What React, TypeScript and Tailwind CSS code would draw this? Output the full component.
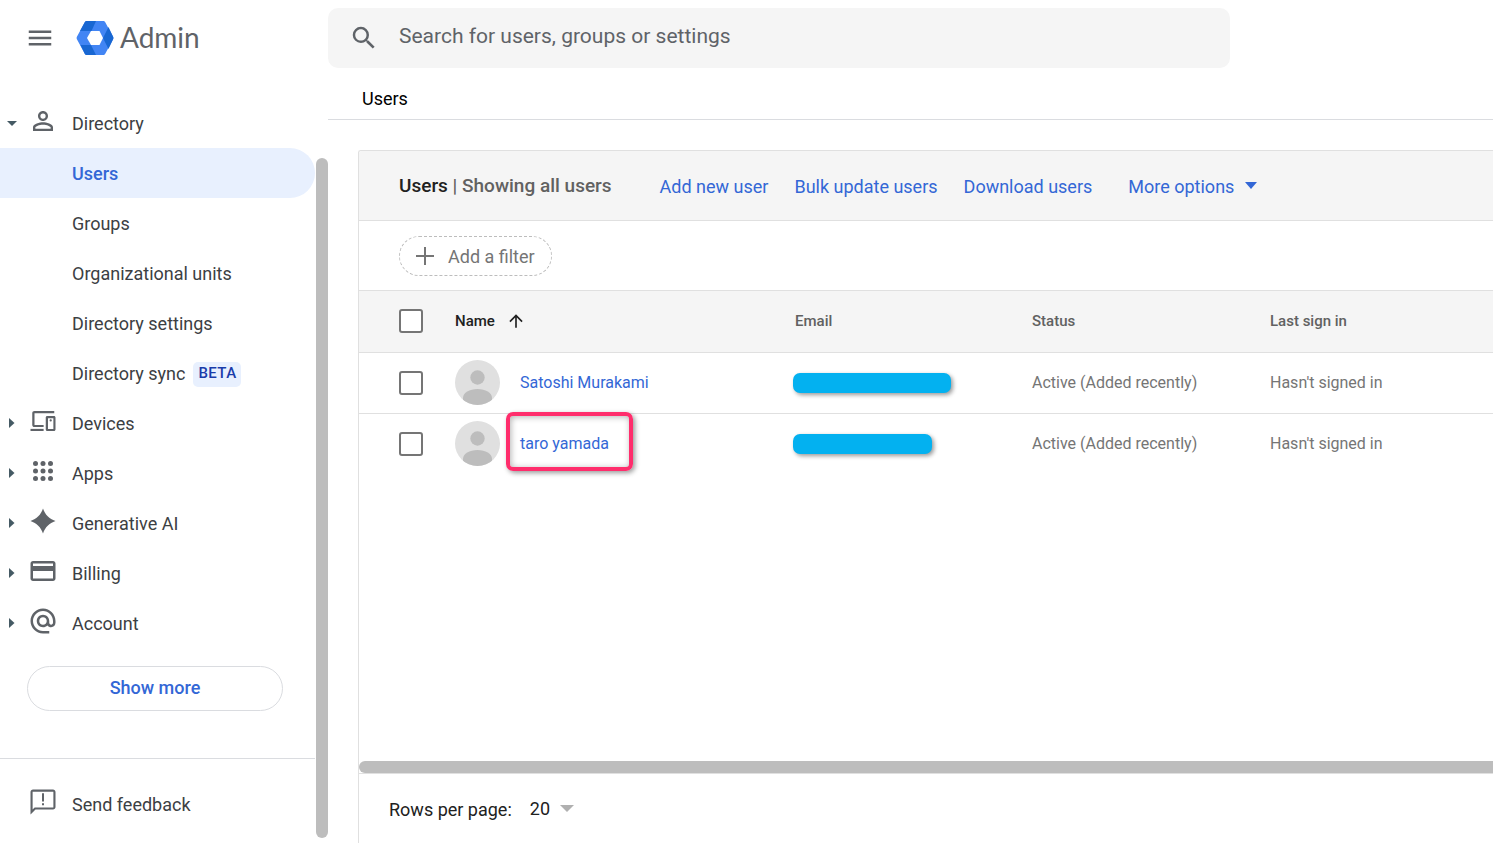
import { useState } from "react";
import type { ReactNode } from "react";
import {
  MdAlternateEmail,
  MdArrowUpward,
  MdMenu,
  MdOutlineCreditCard,
  MdPersonOutline,
  MdSearch,
} from "react-icons/md";

type NavItem = {
  label: string;
  icon: ReactNode;
  open?: boolean;
};

type User = {
  name: string;
  highlighted?: boolean;
  emailWidth: number;
  status: string;
  lastSignIn: string;
};

const users: User[] = [
  {
    name: "Satoshi Murakami",
    emailWidth: 158,
    status: "Active (Added recently)",
    lastSignIn: "Hasn't signed in",
  },
  {
    name: "taro yamada",
    highlighted: true,
    emailWidth: 139,
    status: "Active (Added recently)",
    lastSignIn: "Hasn't signed in",
  },
];

function AdminLogo() {
  return (
    <svg width="38" height="34" viewBox="0 0 38 34" aria-hidden="true">
      <path d="M10.5 0h17q1 0 1.600 1l8 14.700q.7 1.300 0 2.600l-8 14.700q-.6 1-1.600 1h-17q-1 0-1.600-1l-8-14.700q-.7-1.300 0-2.600l8-14.700q.6-1 1.600-1z" fill="#4285f4" />
      <path d="M10.500 0H20l-4.500 10H4l4.900-9q.6-1 1.600-1z" fill="#1967d2" />
      <path d="M32.500 6l4.600 9.700q.7 1.300 0 2.600L32.500 28 27 17z" fill="#1967d2" />
      <path d="M4.500 24H15l5 10h-9.500q-1 0-1.600-1z" fill="#1967d2" />
      <path d="M15 10h8.500l3.500 7-3.500 7H15l-4-7z" fill="#fff" />
    </svg>
  );
}

function DevicesIcon() {
  return (
    <svg width="30" height="30" viewBox="0 0 24 24" fill="currentColor" aria-hidden="true">
      <path d="M5.200 5.700H21V4H5.200C4.100 4 3.400 4.700 3.400 5.800v9.300c0 1 .7 1.700 1.800 1.700H12.500v-1.700H5.200z" />
      <path d="M2 18.300h10.500V20H2z" />
      <path fillRule="evenodd" d="M20.800 8h-5.400c-.7 0-1.200.5-1.200 1.200v9.600c0 .7.500 1.200 1.200 1.200h5.400c.7 0 1.200-.5 1.200-1.200V9.200c0-.7-.5-1.200-1.200-1.200zM16 9.800h4.300v8.500H16z" />
      <circle cx="18.150" cy="11.500" r=".9" />
    </svg>
  );
}

function AppsIcon() {
  return (
    <svg width="30" height="30" viewBox="0 0 24 24" fill="currentColor" aria-hidden="true">
      {[6, 12, 18].map((cy) =>
        [6, 12, 18].map((cx) => <circle key={`${cx}-${cy}`} cx={cx} cy={cy} r="2" />)
      )}
    </svg>
  );
}

function SparkIcon() {
  return (
    <svg width="30" height="30" viewBox="0 0 24 24" fill="currentColor" aria-hidden="true">
      <path d="M12 2c1.700 5 5 8.300 10 10-5 1.700-8.300 5-10 10-1.700-5-5-8.300-10-10 5-1.700 8.300-5 10-10z" />
    </svg>
  );
}

function FeedbackIcon() {
  return (
    <svg className="mb-1 text-[#5f6368]" width="30" height="30" viewBox="0 0 24 24" fill="currentColor" aria-hidden="true">
      <path fillRule="evenodd" d="M20 2H4c-1.100 0-2 .9-2 2v18l4-4h14c1.100 0 2-.9 2-2V4c0-1.100-.9-2-2-2zm.3 14.300H5.300L3.700 17.900V3.700h16.600z" />
      <path d="M11.200 5h1.600v6.500h-1.600zM11.200 13h1.600v1.600h-1.600z" />
    </svg>
  );
}

function Avatar() {
  return (
    <svg className="shrink-0" width="45" height="45" viewBox="0 0 45 45" aria-hidden="true">
      <defs>
        <clipPath id="avatar-clip">
          <circle cx="22.500" cy="22.500" r="22.500" />
        </clipPath>
      </defs>
      <g clipPath="url(#avatar-clip)">
        <rect width="45" height="45" fill="#e0e0e0" />
        <circle cx="22.500" cy="17.500" r="7.200" fill="#bdbdbd" />
        <path d="M8 45v-7c0-5.500 6.500-9 14.500-9S37 32.500 37 38v7z" fill="#bdbdbd" />
      </g>
    </svg>
  );
}

function Caret({ open }: { open?: boolean }) {
  return (
    <svg width="12" height="12" viewBox="0 0 12 12" fill="#455a64" aria-hidden="true">
      <path d={open ? "M1 4h10L6 9z" : "M3 1v10l5.500-5z"} />
    </svg>
  );
}

function NavRow({ label, icon, open }: NavItem) {
  return (
    <button type="button" aria-expanded={!!open} className="flex h-[50px] w-full items-center pl-1.5 text-left">
      <Caret open={open} />
      <span className="mb-1 ml-2.5 text-[#5f6368]">{icon}</span>
      <span className="ml-3.5 pt-0.5">{label}</span>
    </button>
  );
}

function SubLink({ label, active, badge }: { label: string; active?: boolean; badge?: string }) {
  return (
    <a
      href="#"
      aria-current={active ? "page" : undefined}
      className={
        active
          ? "flex h-[50px] items-center rounded-r-full bg-[#e8f0fe] pt-0.5 pl-[72px] font-medium text-[#3367d6]"
          : "flex h-[50px] items-center pt-0.5 pl-[72px]"
      }
    >
      {label}
      {badge && (
        <span className="ml-2 flex h-[25px] items-center rounded-[5px] bg-[#e8f0fe] px-[5px] text-[15px] font-medium tracking-wide text-[#1a3caa]">
          {badge}
        </span>
      )}
    </a>
  );
}

function Sidebar() {
  return (
    <aside className="flex w-[328px] shrink-0 text-lg text-[#3c4043]">
      <div className="min-w-0 flex-1">
        <nav aria-label="Main menu">
          <NavRow label="Directory" icon={<MdPersonOutline size={30} />} open />
          <SubLink label="Users" active />
          <SubLink label="Groups" />
          <SubLink label="Organizational units" />
          <SubLink label="Directory settings" />
          <SubLink label="Directory sync" badge="BETA" />
          <NavRow label="Devices" icon={<DevicesIcon />} />
          <NavRow label="Apps" icon={<AppsIcon />} />
          <NavRow label="Generative AI" icon={<SparkIcon />} />
          <NavRow label="Billing" icon={<MdOutlineCreditCard size={30} />} />
          <NavRow label="Account" icon={<MdAlternateEmail size={30} />} />
        </nav>
        <div className="pt-[18px] pr-8 pb-[47px] pl-[27px]">
          <button
            type="button"
            className="h-[45px] w-full rounded-full border border-[#dadce0] pb-0.5 font-medium text-[#3367d6]"
          >
            Show more
          </button>
        </div>
        <div className="border-t border-[#dadce0] pt-5">
          <button type="button" className="flex h-[50px] w-full items-center pl-7 text-left">
            <FeedbackIcon />
            <span className="ml-3.5 pt-0.5">Send feedback</span>
          </button>
        </div>
      </div>
      <div className="ml-px flex w-3 flex-col pt-[60px] pb-[5px]">
        <div className="flex-1 rounded-full bg-[#bdbdbd]" />
      </div>
    </aside>
  );
}

function Checkbox({ label }: { label: string }) {
  return (
    <input
      type="checkbox"
      aria-label={label}
      className="block size-6 appearance-none rounded-[3px] border-2 border-[#757575] bg-white checked:bg-[#3367d6]"
    />
  );
}

function UserRow({ user }: { user: User }) {
  return (
    <tr className="h-[61px] border-b border-[#e0e0e0] text-[#757575] last:border-b-0">
      <td className="pl-10">
        <Checkbox label={`Select ${user.name}`} />
      </td>
      <td>
        <div className="flex items-center gap-5">
          <Avatar />
          <a href="#" className="relative text-[#3367d6]">
            {user.name}
            {user.highlighted && (
              <span className="absolute -top-5 -right-6 -bottom-[15px] -left-3.5 rounded-[7px] border-4 border-[#ff2d6c] shadow-[2px_2px_5px_rgba(0,0,0,0.4),inset_1px_1px_6px_rgba(0,0,0,0.3)]" />
            )}
          </a>
        </div>
      </td>
      <td>
        <div
          className="-ml-0.5 h-5 rounded-[7px] bg-[#03b1f0] shadow-[2px_2px_4px_rgba(0,0,0,0.4)]"
          style={{ width: user.emailWidth }}
        />
      </td>
      <td>{user.status}</td>
      <td>{user.lastSignIn}</td>
    </tr>
  );
}

function UsersPanel() {
  const [rows, setRows] = useState("20");

  return (
    <section className="mt-[30px] ml-[30px] flex min-h-0 flex-1 flex-col overflow-hidden rounded-tl-[3px] border-t border-l border-[#e0e0e0]">
      <div className="flex h-[70px] shrink-0 items-center border-b border-[#e0e0e0] bg-[#f5f5f5] pl-10 text-lg whitespace-nowrap text-[#3367d6]">
        <h1 className="mr-12 text-[19px] font-medium text-[#616161]">
          <span className="text-[#212121]">Users</span> | Showing all users
        </h1>
        <div className="flex items-center gap-[26px] pt-0.5">
          <a href="#">Add new user</a>
          <a href="#">Bulk update users</a>
          <a href="#">Download users</a>
          <button type="button" className="ml-2.5 flex items-center gap-2.5">
            More options
            <svg className="mb-0.5" width="14" height="8" viewBox="0 0 14 8" fill="currentColor" aria-hidden="true">
              <path d="M1 0h12L7 7z" />
            </svg>
          </button>
        </div>
      </div>

      <div className="flex h-[70px] shrink-0 items-center border-b border-[#e0e0e0] pl-10">
        <button
          type="button"
          className="flex h-10 items-center rounded-full border border-dashed border-[#bdbdbd] px-4 text-lg text-[#757575]"
        >
          <svg className="mr-3.5" width="18" height="18" viewBox="0 0 18 18" stroke="currentColor" strokeWidth="2" aria-hidden="true">
            <path d="M9 0v18M0 9h18" />
          </svg>
          <span className="pt-0.5">Add a filter</span>
        </button>
      </div>

      <div className="min-h-0 flex-1 overflow-hidden">
        <table className="w-full table-fixed border-collapse text-left text-base">
          <colgroup>
            <col className="w-24" />
            <col className="w-[340px]" />
            <col className="w-[237px]" />
            <col className="w-[238px]" />
            <col />
          </colgroup>
          <thead>
            <tr className="h-[61px] border-b border-[#e0e0e0] bg-[#f5f5f5] text-[15px] text-[#616161]">
              <th className="pl-10">
                <Checkbox label="Select all users" />
              </th>
              <th className="font-medium text-[#212121]">
                <button type="button" className="flex items-center gap-[11px]">
                  Name
                  <MdArrowUpward size={20} />
                </button>
              </th>
              <th className="font-medium">Email</th>
              <th className="font-medium">Status</th>
              <th className="font-medium">Last sign in</th>
            </tr>
          </thead>
          <tbody>
            {users.map((user) => (
              <UserRow key={user.name} user={user} />
            ))}
          </tbody>
        </table>
      </div>

      <div className="-mr-3 h-3 shrink-0 rounded-full bg-[#bdbdbd]" />
      <footer className="flex h-[70px] shrink-0 items-center border-t border-[#e0e0e0] pl-[30px] text-lg text-[#212121]">
        <label htmlFor="rows-per-page" className="mr-[18px] pt-0.5">Rows per page:</label>
        <div className="flex items-center">
          <select
            id="rows-per-page"
            value={rows}
            onChange={(e) => setRows(e.target.value)}
            className="w-[30px] appearance-none bg-transparent"
          >
            <option value="20">20</option>
            <option value="30">30</option>
            <option value="50">50</option>
          </select>
          <svg className="pointer-events-none" width="14" height="7" viewBox="0 0 14 7" fill="#b0b0b0" aria-hidden="true">
            <path d="M0 0h14L7 7z" />
          </svg>
        </div>
      </footer>
    </section>
  );
}

export default function App() {
  return (
    <div className="flex h-screen flex-col overflow-hidden bg-white font-[Roboto,sans-serif]">
      <header className="flex shrink-0 pt-2">
        <div className="flex h-[60px] w-[328px] shrink-0 items-center pl-[25px] text-[#5f6368]">
          <button type="button" aria-label="Main menu">
            <MdMenu size={30} />
          </button>
          <a href="#" className="ml-[21px] flex items-center gap-1.5">
            <AdminLogo />
            <span className="pb-0.5 font-[Lato,sans-serif] text-[28px]">Admin</span>
          </a>
        </div>
        <label className="mr-[30px] flex h-[60px] max-w-[902px] flex-1 items-center rounded-[10px] bg-[#f5f5f5] pl-[21px] text-[#5f6368]">
          <MdSearch size={30} />
          <input
            type="search"
            aria-label="Search"
            placeholder="Search for users, groups or settings"
            className="ml-5 min-w-0 flex-1 bg-transparent pb-0.5 text-[21px] outline-none placeholder:text-[#5f6368]"
          />
        </label>
      </header>

      <div className="flex min-h-0 flex-1">
        <div className="flex shrink-0 pt-[30px]">
          <Sidebar />
        </div>
        <main className="flex min-w-0 flex-1 flex-col">
          <div className="flex h-[52px] shrink-0 items-center border-b border-[#dadce0] pt-2.5 pl-[34px] text-lg text-black">
            Users
          </div>
          <UsersPanel />
        </main>
      </div>
    </div>
  );
}
